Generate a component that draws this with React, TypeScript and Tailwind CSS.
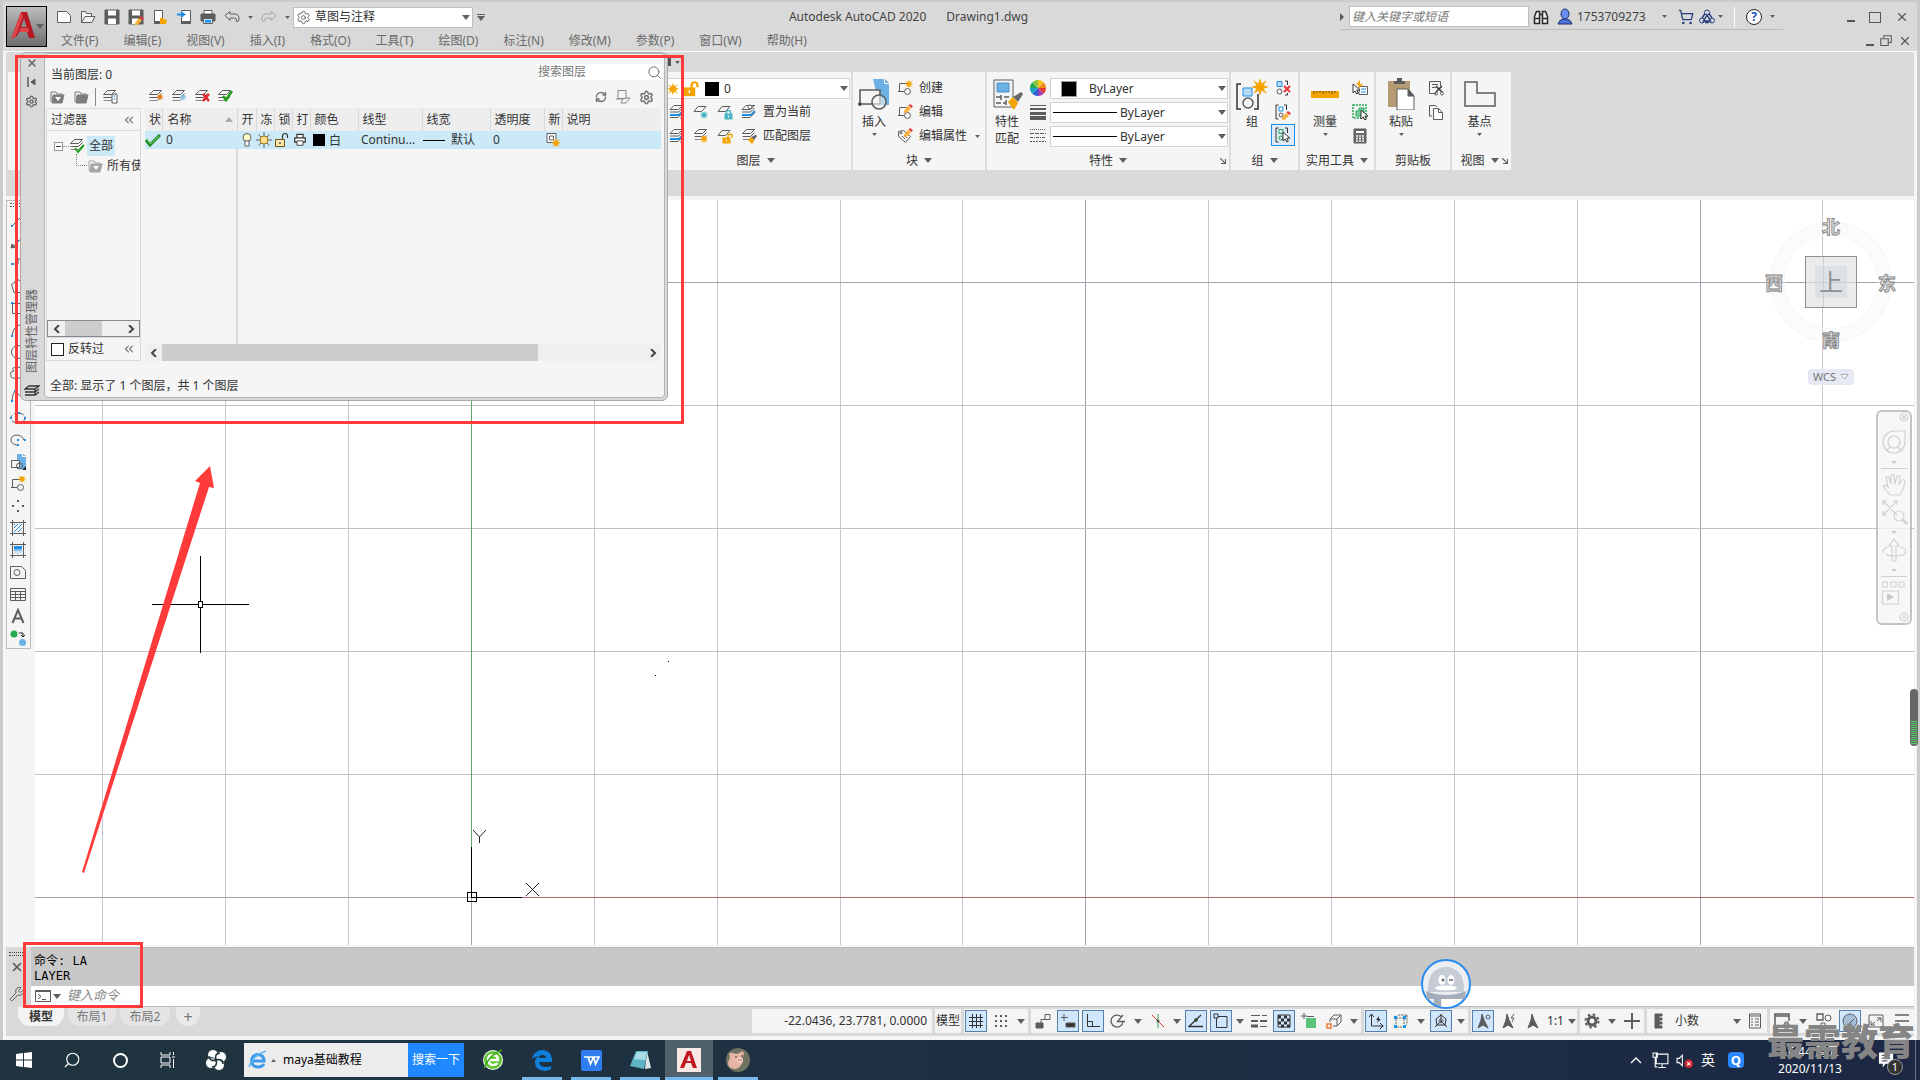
import type { ReactNode } from "react";
import { ChevronsLeft, Search, Settings, RefreshCw, ShoppingCart, Wrench, X } from "lucide-react";

const G = "#5c5c5c";
const BLUE = "#1e90e6";

function Ico({ s = 16, vb = "0 0 16 16", children }: { s?: number; vb?: string; children: ReactNode }) {
  return (
    <svg width={s} height={s} viewBox={vb} fill="none" stroke={G} strokeWidth="1" className="shrink-0">
      {children}
    </svg>
  );
}

function Caret({ small = false }: { small?: boolean }) {
  return (
    <svg width={small ? 5 : 8} height={small ? 3 : 5} viewBox="0 0 8 5" className="pointer-events-none shrink-0">
      <path d="M0 0h8L4 5z" fill="#5f5f5f" />
    </svg>
  );
}

/* ---- shared icon parts, all on a 16px grid ---- */

const Star = ({ x, y, c = "#f5a300", r = 4 }: { x: number; y: number; c?: string; r?: number }) => (
  <g transform={`translate(${x} ${y}) scale(${r / 4})`} stroke="none" fill={c}>
    <path d="M0-5L1-2 4-4 2-1 5 0 2 1 4 4 1 2 0 5-1 2-4 4-2 1-5 0-2-1-4-4-1-2z" />
  </g>
);
const Sheets = () => (
  <>
    <path d="M5.5 1.5h8l-4 4h-8zM1.5 8.5h8l4-4" />
    <path d="M1.5 11.5h8l4-4" stroke="#8a8a8a" />
  </>
);
const Sheet = () => <path d="M5 2.5h8l-4.5 5H1z" />;
const Lock = ({ x, y, c }: { x: number; y: number; c: string }) => (
  <g transform={`translate(${x} ${y})`}>
    <rect x="0" y="3" width="7" height="5" fill={c} stroke={c} />
    <path d="M1.5 3V1.5a2 2 0 014 0V3" stroke={c} strokeWidth="1.3" />
    <path d="M3.5 4.5v2" stroke="#fff" />
  </g>
);
const Unlock = ({ x, y, c, k = 1 }: { x: number; y: number; c: string; k?: number }) => (
  <g transform={`translate(${x} ${y}) scale(${k})`}>
    <rect x="0" y="4" width="7" height="5" fill={c} stroke={c} />
    <path d="M5 4V2a2 2 0 014 0v1.5" stroke={c} strokeWidth="1.5" />
    <path d="M3.5 5.5v2" stroke="#fff" />
  </g>
);
const Cursor = ({ x, y }: { x: number; y: number }) => (
  <path transform={`translate(${x} ${y})`} d="M0 0v9l2.2-2 1.5 3 1.6-.8-1.5-3H7z" fill="#fff" stroke="#333" />
);
const Pencil = ({ x, y }: { x: number; y: number }) => (
  <g transform={`translate(${x} ${y})`} stroke="none">
    <path d="M0 7l4-5 3 2.5-4 4L0 9z" fill="#f8b133" />
    <path d="M4.5 1.5L6 0l3 2.5L7.5 4z" fill="#e8323a" />
  </g>
);
const Brush = ({ x, y }: { x: number; y: number }) => (
  <g transform={`translate(${x} ${y})`} stroke="none">
    <path d="M3 2l3 3 3-4-1-1z" fill="#666" />
    <path d="M0 5l3-3 3.5 3.5L4 9z" fill="#f5a300" />
  </g>
);
const BlockShape = () => (
  <>
    <path d="M2.5 11V3.5h9M1 11.5h6" />
    <circle cx="10.5" cy="11.5" r="3" />
  </>
);

const QUICK_ICONS: { name: string; art: ReactNode }[] = [
  { name: "新建", art: <path d="M1.5 2.5h9l4 4v7h-13z" fill="#fff" /> },
  { name: "打开", art: <path d="M1.5 13.5v-11h4l1 2h5v3M1.5 13.5l3.5-6h10l-3 6z" fill="#f2f2f2" /> },
  {
    name: "保存",
    art: (
      <>
        <path d="M1 1h14v14H1z" fill="#5c5c5c" />
        <path d="M4 1.5h8v5H4zM4 9.5h8V15H4z" fill="#fff" stroke="none" />
      </>
    ),
  },
  {
    name: "另存为",
    art: (
      <>
        <path d="M1 1h14v14H1z" fill="#5c5c5c" />
        <path d="M4 1.5h8v5H4zM4 9.5h6V15H4z" fill="#fff" stroke="none" />
        <Pencil x={7} y={7} />
      </>
    ),
  },
  {
    name: "从移动设备打开",
    art: (
      <>
        <path d="M2.5 1.5h8v13h-8z" fill="#fff" />
        <path d="M2.5 12.5h8v2h-8z" fill="#5c5c5c" />
        <path d="M8 15V9h3l1 1.5h3L14 15z" fill="#f5a300" stroke="none" />
      </>
    ),
  },
  {
    name: "保存到移动设备",
    art: (
      <>
        <path d="M5.5 1.5h9v13h-9z" fill="#fff" />
        <path d="M5.5 12.5h9v2h-9z" fill="#5c5c5c" />
        <path d="M1 4.5h4V2l5 3.5L5 9V6.5H1z" fill={BLUE} stroke="none" />
      </>
    ),
  },
  {
    name: "打印",
    art: (
      <>
        <path d="M4 5V1.5h8V5" fill="#fff" />
        <path d="M1 5h14v7H1z" fill="#5c5c5c" />
        <path d="M3.5 9.5h9v5h-9z" fill="#cfe6fa" />
        <path d="M5 11h6v2.5H5z" fill={BLUE} stroke="none" />
      </>
    ),
  },
];

const MENUS = ["文件(F)", "编辑(E)", "视图(V)", "插入(I)", "格式(O)", "工具(T)", "绘图(D)", "标注(N)", "修改(M)", "参数(P)", "窗口(W)", "帮助(H)"];

function TitleBar() {
  return (
    <header className="flex h-[49px] bg-[#d9d9d9]">
      <button aria-label="应用程序菜单" className="ml-[3px] mt-1 flex h-[41px] w-[41px] shrink-0 items-center border border-black bg-linear-to-b from-[#bdbdbd] to-[#6f6f6f] pl-1">
        <svg width="25" height="30" viewBox="0 0 25 30">
          <path d="M10 0h6l8 26h-6l-2-6H8l-2 4-6 3z" fill="#b5161f" />
          <path d="M10 0l2 4L5 24l-5 3zM9 16h8l1 4H8z" fill="#e0454b" />
          <path d="M13 6l2.5 9H10z" fill="#8c8c8c" />
        </svg>
        <Caret />
      </button>
      <div className="flex min-w-0 flex-1 flex-col pt-px">
        <div className="flex h-7 items-center">
          <div className="flex items-center gap-2 pl-[9px]">
            {QUICK_ICONS.map((i) => (
              <button key={i.name} aria-label={i.name}>
                <Ico>{i.art}</Ico>
              </button>
            ))}
            <button aria-label="放弃">
              <Ico><path d="M1 6.5l5-4V5h5q4 0 4 5 0 2-2 3 0-4-3-4H6v2.5z" /></Ico>
            </button>
            <Caret small />
            <button aria-label="重做" className="opacity-40">
              <Ico><path d="M15 6.5l-5-4V5H5q-4 0-4 5 0 2 2 3 0-4 3-4h4v2.5z" /></Ico>
            </button>
            <Caret small />
          </div>
          <label className="ml-[3px] flex h-[21px] w-[180px] items-center gap-1 border border-[#bdbdbd] bg-white pl-[2px] pr-[2px]">
            <Settings size={15} color={G} strokeWidth={1.5} />
            <select aria-label="工作空间" className="min-w-0 flex-1 appearance-none text-xs leading-4 text-[#333]">
              <option>草图与注释</option>
            </select>
            <Caret />
          </label>
          <button aria-label="自定义" className="ml-1 flex w-2 flex-col gap-px">
            <span className="h-px bg-[#5f5f5f]" />
            <Caret />
          </button>
          <h1 className="flex flex-1 justify-center gap-5 pr-2 text-xs text-[#444]">
            <span>Autodesk AutoCAD 2020</span>
            <span>Drawing1.dwg</span>
          </h1>
          <div className="flex items-center border-b border-[#bcbcbc] pr-2">
            <svg width="4" height="8" viewBox="0 0 4 8" className="mr-[5px]"><path d="M0 0l4 4-4 4z" fill={G} /></svg>
            <input aria-label="搜索帮助" placeholder="键入关键字或短语" className="h-[21px] w-[180px] border border-[#bdbdbd] bg-white px-[2px] text-xs italic placeholder:text-[#777]" />
            <Ico s={24} vb="-4 -4 24 24">
              <path d="M1.5 14.5v-7l2-5h3v12zM9.5 14.5v-12h3l2 5v7zM6.5 5.5h3M1.5 9.5h5M9.5 9.5h5" fill="#eee" stroke="#2a2a2a" strokeWidth="1.5" />
            </Ico>
            <Ico s={24} vb="-4 -4 24 24">
              <ellipse cx="8" cy="5" rx="4" ry="5" fill="#6a8ef2" stroke="#1d2f66" />
              <path d="M1 15q1-4 5-5h4q4 1 5 5z" fill="#4b72dc" stroke="#1d2f66" />
            </Ico>
            <button className="w-[85px] text-left text-xs text-[#444]">1753709273</button>
            <Caret small />
            <ShoppingCart size={16} color="#28407c" strokeWidth={2} className="ml-[11px]" />
            <Ico s={24} vb="-5 -4 24 24">
              <circle cx="8" cy="3.5" r="2.5" stroke="#28407c" />
              <path d="M6 4.5L3 9M10 4.5L13 9M8 6l-3.5 6h7zM6 13.5h4" stroke="#28407c" strokeWidth="1.4" />
              <circle cx="3" cy="11.5" r="2.5" stroke="#28407c" />
              <circle cx="13" cy="11.5" r="2.5" stroke="#28407c" />
            </Ico>
            <Caret small />
            <span className="mx-[11px] h-5 w-px bg-white" />
            <button aria-label="帮助" className="mr-2 flex h-4 w-4 items-center justify-center rounded-full border border-[#222] bg-white text-xs font-bold leading-3 text-[#1d4fc0]">?</button>
            <Caret small />
          </div>
          <div className="flex w-[134px] items-center justify-end gap-[14px] pr-2 text-[#555]">
            <button aria-label="最小化" className="mt-2 h-[2px] w-2 bg-[#555]" />
            <button aria-label="最大化" className="h-[11px] w-3 border border-[#555]" />
            <button aria-label="关闭"><X size={14} strokeWidth={2} /></button>
          </div>
        </div>
        <nav className="flex h-5 items-center pl-[14px]">
          {MENUS.map((m) => (
            <button key={m} className="mr-[25px] whitespace-nowrap text-xs text-[#6a6a6a]">{m}</button>
          ))}
          <div className="ml-auto flex items-center gap-[6px] pr-[5px]">
            <button aria-label="最小化图形" className="mt-2 h-[2px] w-2 bg-[#555]" />
            <button aria-label="还原图形">
              <Ico s={12}><path d="M5 4V1h10v9h-4M1 5h10v9H1z" strokeWidth="1.5" /></Ico>
            </button>
            <button aria-label="关闭图形"><X size={14} color="#555" strokeWidth={2} /></button>
          </div>
        </nav>
      </div>
    </header>
  );
}

/* ---- ribbon ---- */

function Panel({ title, width, caret = true, launcher = false, children }: { title: string; width: string; caret?: boolean; launcher?: boolean; children: ReactNode }) {
  return (
    <section className={`relative flex shrink-0 flex-col border-r-2 border-[#dcdcdc] bg-[#f5f5f5] ${width}`}>
      <div className="flex h-[79px] pt-1">{children}</div>
      <button className="flex h-[19px] items-center justify-center gap-[6px] whitespace-nowrap text-xs text-[#333]">
        {title}
        {caret && <Caret />}
      </button>
      {launcher && (
        <span className="absolute bottom-[6px] right-[3px]">
          <Ico s={6} vb="0 0 6 6"><path d="M0 0l5 5M5.5 1v4.5H1" strokeWidth="1.2" /></Ico>
        </span>
      )}
    </section>
  );
}

function Tool({ label, art, caret = false }: { label: string; art: ReactNode; caret?: boolean }) {
  return (
    <button className="flex h-6 items-center gap-[6px] whitespace-nowrap text-xs text-[#333]">
      <Ico>{art}</Ico>
      {label}
      {caret && <span className="ml-[2px]"><Caret small /></span>}
    </button>
  );
}

function BigTool({ lines, art, width, caret = true }: { lines: string[]; art: ReactNode; width: string; caret?: boolean }) {
  return (
    <button className={`flex flex-col items-center text-xs leading-[17px] text-[#333] ${width}`}>
      <span className="mb-px h-9 pt-[2px]">
        <Ico s={32} vb="0 0 32 32">{art}</Ico>
      </span>
      {lines.map((l) => <span key={l}>{l}</span>)}
      {caret && <span className="flex h-2 items-center"><Caret small /></span>}
    </button>
  );
}

function PropCombo({ label, line }: { label: string; line: boolean }) {
  return (
    <label className="flex h-[21px] items-center border border-[#d4d4d4] bg-white pr-px">
      {line ? <span className="ml-[2px] mr-[3px] h-px w-16 bg-black" /> : <span className="ml-[10px] mr-3 h-4 w-4 border border-[#999] bg-black" />}
      <select aria-label={label} className="min-w-0 flex-1 appearance-none text-xs leading-4 text-[#333]">
        <option>ByLayer</option>
      </select>
      <Caret />
    </label>
  );
}

const BlueSheets = () => (
  <>
    <path d="M1 11h9l4-4" stroke={BLUE} strokeWidth="2" />
    <path d="M5 1.5h8.5l-4 4H1zM1 8h8.5l4-4M1 13.5h8l5-5" />
  </>
);

const LAYER_ROWS: { label: string; icons: ReactNode[]; art: ReactNode }[] = [
  {
    label: "置为当前",
    icons: [
      <><BlueSheets /><path d="M14 9l-1.5 6" stroke="#222" strokeWidth="2" /></>,
      <><Sheet /><Star x={11} y={11} c="#4ab6c4" r={3.5} /></>,
      <><Sheet /><Lock x={8} y={7} c="#4ab6c4" /></>,
    ],
    art: <><BlueSheets /><circle cx="9" cy="3" r="2" fill="#fff" /></>,
  },
  {
    label: "匹配图层",
    icons: [
      <><BlueSheets /><path d="M14 9l-1.5 6" stroke="#222" strokeWidth="2" /></>,
      <><Sheets /><Star x={11} y={11} r={3.5} /></>,
      <><Sheet /><Unlock x={6} y={6} c="#f5a300" /></>,
    ],
    art: <><Sheets /><Brush x={7} y={7} /></>,
  },
];

function Ribbon() {
  return (
    <div className="mx-[3px] h-[145px] border-t border-white bg-[#d9d9d9]">
      <div className="flex h-5 items-center pl-[661px]">
        <span className="mr-1 h-2 w-1 bg-[#555]" />
        <Caret small />
      </div>
      <div className="flex h-[98px] pl-[2px]">
        <div className="w-[652px] shrink-0 border-r-2 border-[#dcdcdc] bg-[#f5f5f5]" />
        <Panel title="图层" width="w-[193px] px-px">
          <div className="flex flex-1 flex-col">
            <label className="mb-px mt-[2px] flex h-[21px] items-center border border-[#d4d4d4] bg-white pr-px">
              <Ico s={20} vb="-4 0 20 16"><Star x={7} y={8} r={5} /></Ico>
              <Ico s={18}><Unlock x={2} y={2} c="#f5a300" k={1.3} /></Ico>
              <span className="ml-[5px] mr-[5px] h-[14px] w-[14px] bg-black" />
              <select aria-label="图层" className="min-w-0 flex-1 appearance-none text-xs leading-4 text-[#333]"><option>0</option></select>
              <Caret />
            </label>
            {LAYER_ROWS.map((r) => (
              <div key={r.label} className="flex h-6 items-center gap-2 pl-2">
                {r.icons.map((icon, i) => <Ico key={i}>{icon}</Ico>)}
                <Tool label={r.label} art={r.art} />
              </div>
            ))}
          </div>
        </Panel>
        <Panel title="块" width="w-[134px]">
          <BigTool
            lines={["插入"]}
            width="w-10 pl-[2px]"
            art={
              <>
                <path d="M15 1h11v5h5v21H21z" fill="#6cb1e6" stroke="none" />
                <path d="M27 1l4 4h-4z" fill="#6cb1e6" stroke="none" />
                <path d="M2 12h20v14H2z" fill="#f5f5f5" strokeWidth="1.6" />
                <circle cx="21" cy="24" r="7" fill="#f5f5f5" strokeWidth="1.6" fillOpacity=".6" />
                <circle cx="2" cy="26" r="1.5" fill="#333" />
              </>
            }
          />
          <div className="ml-1">
            <Tool label="创建" art={<><BlockShape /><Star x={12} y={4} r={3.5} /></>} />
            <Tool label="编辑" art={<><BlockShape /><Pencil x={7} y={0} /></>} />
            <Tool label="编辑属性" caret art={<><path d="M1.5 3.5l5-1 7 6-5 6-7-6z" /><circle cx="4" cy="5" r="1" /><path d="M5 8l3 3M7 7l3 3" /><Pencil x={7} y={0} /></>} />
          </div>
        </Panel>
        <Panel title="特性" width="w-[244px] px-px" launcher>
          <BigTool
            lines={["特性", "匹配"]}
            width="w-[38px]"
            caret={false}
            art={
              <>
                <path d="M3 2h19v27H3z" />
                <path d="M6 5h12v9H6z" fill="#6cb1e6" stroke="#4c8fc4" />
                <path d="M5 19h5M13 19h5M10 17v5M5 25h5M12 25h3M15 22v5" strokeWidth="1.5" />
                <path d="M22 19l5 5 5-8-2-2z" fill="#666" stroke="none" />
                <path d="M17 24l5-5 5 6-4 7z" fill="#f5a300" stroke="none" />
              </>
            }
          />
          <div className="flex w-6 shrink-0 flex-col items-center">
            <div className="flex h-6 items-center">
              <svg width="16" height="16" viewBox="-8 -8 16 16">
                {["#f5c518", "#f08c1a", "#e5373c", "#9b3fb5", "#2d5fd0", "#1aa3c4", "#24a852", "#8cc63f"].map((c, i) => (
                  <path key={c} d="M0 0V-8A8 8 0 015.7-5.7z" fill={c} transform={`rotate(${i * 45})`} />
                ))}
              </svg>
            </div>
            <div className="flex h-6 items-center">
              <Ico><path d="M0 1.5h16" /><path d="M0 5h16" strokeWidth="2" /><path d="M0 9.5h16" strokeWidth="3" /><path d="M0 14h16" strokeWidth="4" /></Ico>
            </div>
            <div className="flex h-6 items-center">
              <Ico><path d="M0 1.5h16" strokeDasharray="1 1" /><path d="M0 5.5h16" strokeDasharray="4 1" /><path d="M0 9.5h16" strokeDasharray="3 1 1 1" /><path d="M0 13.5h16" strokeDasharray="2 1" /></Ico>
            </div>
          </div>
          <div className="flex flex-1 flex-col gap-[3px] pt-[2px]">
            <PropCombo label="对象颜色" line={false} />
            <PropCombo label="线宽" line />
            <PropCombo label="线型" line />
          </div>
        </Panel>
        <Panel title="组" width="w-[69px]">
          <BigTool
            lines={["组"]}
            width="w-10 pl-[2px]"
            caret={false}
            art={
              <>
                <path d="M5 6H1v25h4M18 31h4V16" stroke="#333" strokeWidth="1.5" />
                <path d="M7 10h9v8H7z" fill="#b9dcf6" stroke={BLUE} />
                <circle cx="12" cy="25" r="5" strokeWidth="1.5" />
                <Star x={24} y={9} r={7} />
              </>
            }
          />
          <div className="flex flex-col items-center">
            <button aria-label="解除编组" className="flex h-6 w-6 items-center justify-center">
              <Ico><path d="M2 1.5h5v5H2z" stroke={BLUE} fill="#b9dcf6" /><circle cx="4.5" cy="11.5" r="2.5" /><path d="M10 1h2.5v4M12.5 13v2H10" stroke="#333" /><path d="M9 6l6 6M15 6l-6 6" stroke="#e5373c" strokeWidth="2" /></Ico>
            </button>
            <button aria-label="组编辑" className="flex h-6 w-6 items-center justify-center">
              <Ico><path d="M3.5 1H1v14h2.5M9 1h2.5v5" stroke="#333" /><path d="M4 3h4v4H4z" stroke={BLUE} /><circle cx="6" cy="11" r="2" /><Pencil x={7} y={7} /></Ico>
            </button>
            <button aria-label="启用组选择" aria-pressed="true" className="flex h-[22px] w-6 items-center justify-center border border-[#1e90e6] bg-[#deebf7]">
              <Ico><path d="M3.5 1H1v14h2.5M10 1h2.5v5" stroke="#333" /><path d="M4 2.5h4v4H4z" stroke="#24a852" /><circle cx="6" cy="11" r="2" stroke="#24a852" /><Cursor x={8} y={5} /></Ico>
            </button>
          </div>
        </Panel>
        <Panel title="实用工具" width="w-[76px]">
          <BigTool
            lines={["测量"]}
            width="w-[50px]"
            art={
              <>
                <path d="M2 13h28v7H2z" fill="#f5a300" stroke="none" />
                <path d="M5 13v3M8 13v2M11 13v2M14 13v3M17 13v2M20 13v2M23 13v3M26 13v2" stroke="#6b4a00" />
              </>
            }
          />
          <div className="flex flex-col">
            <button aria-label="快速选择" className="flex h-6 w-5 items-center justify-center">
              <Ico><path d="M7 6.5h8.5v8H7z" fill="#fff" /><path d="M9 9h5M9 12h5" stroke={BLUE} /><Cursor x={1} y={4} /><path d="M8 0L4 5h3L6 9l5-5H8z" fill="#f5a300" stroke="none" /></Ico>
            </button>
            <button aria-label="全部选择" className="flex h-6 w-5 items-center justify-center">
              <Ico><path d="M1 1h13v13H1z" stroke="#24a852" strokeWidth="1.5" strokeDasharray="2 1" /><path d="M4 7v5h5V9h3V4H7v3z" fill="#7fd09c" stroke="#24a852" /><Cursor x={9} y={6} /></Ico>
            </button>
            <button aria-label="快速计算器" className="flex h-6 w-5 items-center justify-center">
              <Ico><path d="M2 1h12v14H2z" fill="#666" /><path d="M4 3h8v2H4z" fill="#fff" stroke="none" /><path d="M4 8h8M4 10.5h8M4 13h8" stroke="#fff" strokeWidth="1.5" strokeDasharray="2 1" /></Ico>
            </button>
          </div>
        </Panel>
        <Panel title="剪贴板" width="w-[76px]" caret={false}>
          <BigTool
            lines={["粘贴"]}
            width="w-[50px]"
            art={
              <>
                <path d="M3 3h22v26H3z" fill="#b59a74" stroke="none" />
                <path d="M9 3h3V0h5v3h3v3H9z" fill="#5c5c5c" stroke="none" />
                <path d="M12 11h11l6 7v14H12z" fill="#fff" />
                <path d="M23 11l6 7h-6z" fill="#5c5c5c" />
              </>
            }
          />
          <div className="flex flex-col">
            <button aria-label="剪切" className="flex h-6 w-5 items-center justify-center">
              <Ico><path d="M12.5 6V1.5h-11v12H8M4 4.5h6M4 7.5h4" /><path d="M8 6l6 6M14 6l-6 6" strokeWidth="1.5" stroke="#333" /><circle cx="8" cy="13.5" r="1.5" /><circle cx="14" cy="13.5" r="1.5" /></Ico>
            </button>
            <button aria-label="复制" className="flex h-6 w-5 items-center justify-center">
              <Ico><path d="M4 12H1.5V1.5h6L9 3" /><path d="M5.5 4.5h5l4 4v7h-9z" fill="#fff" /><path d="M10.5 4.5v4h4" /></Ico>
            </button>
          </div>
        </Panel>
        <Panel title="视图" width="w-[61px] pr-1" launcher>
          <BigTool lines={["基点"]} width="w-full" art={<path d="M1 4h12v11h18v13H1z" strokeWidth="1.5" />} />
        </Panel>
      </div>
    </div>
  );
}

/* ---- layer properties palette ---- */

const COLS = [
  { h: "状", w: "w-[17px]" },
  { h: "名称", w: "w-[75px]" },
  { h: "开", w: "w-[19px]" },
  { h: "冻", w: "w-[18px]" },
  { h: "锁", w: "w-[18px]" },
  { h: "打", w: "w-[18px]" },
  { h: "颜色", w: "w-12" },
  { h: "线型", w: "w-16" },
  { h: "线宽", w: "w-[68px]" },
  { h: "透明度", w: "w-[54px]" },
  { h: "新", w: "w-[18px]" },
  { h: "说明", w: "" },
];

const FolderIco = ({ c = "#7d7d7d" }: { c?: string }) => (
  <>
    <path d="M2 3h5l1 2h5v2M2 3v10" stroke={c} />
    <path d="M4 6h11l-2 8H3z" fill={c} stroke={c} />
  </>
);

const LAYER_TOOLS: { name: string; art: ReactNode }[] = [
  { name: "新建图层", art: <><Sheets /><Star x={12} y={8} r={3} c="#e87b10" /></> },
  { name: "在所有视口中冻结", art: <><Sheets /><Star x={12} y={8} r={3} c="#7fc4e0" /></> },
  { name: "删除图层", art: <><Sheets /><path d="M9 5l6 7M15 5l-6 7" stroke="#e5252c" strokeWidth="2.5" /></> },
  { name: "置为当前图层", art: <><Sheets /><path d="M6 7l3 4 6-9" stroke="#24a01e" strokeWidth="2.5" /></> },
];

function ScrollArrow({ left = false }: { left?: boolean }) {
  return (
    <button aria-label={left ? "向左滚动" : "向右滚动"} className="flex w-[17px] shrink-0 items-center justify-center">
      <Ico s={8} vb="0 0 8 8"><path d={left ? "M6 0L2 4l4 4" : "M2 0l4 4-4 4"} strokeWidth="2" stroke="#444" /></Ico>
    </button>
  );
}

function LayerPalette() {
  return (
    <div className="absolute left-[20px] top-[52px] flex h-[349px] w-[648px] rounded-md border border-[#a9a9a9] bg-[#d9d9d9] pb-[2px] pr-[2px]">
      <div className="mr-[2px] flex w-[21px] flex-col items-center pb-px text-[#666]">
        <button aria-label="关闭选项板" className="mt-1"><X size={12} strokeWidth={3} /></button>
        <span className="mt-2"><Ico s={10} vb="0 0 10 10"><path d="M1 0v10" strokeWidth="1.5" /><path d="M8 2v6L4 5z" fill={G} /></Ico></span>
        <Settings size={13} strokeWidth={2.5} className="mt-2" />
        <span className="mb-2 mt-auto rotate-180 text-xs leading-4 text-[#666] [text-orientation:sideways] [writing-mode:vertical-rl]">图层特性管理器</span>
        <Ico><path d="M5 5h10l-4 3H1zM1 11h10l4-3M1 14h10l4-3M11 8v3M11 11v3" strokeWidth="1.3" stroke="#333" /></Ico>
      </div>
      <div className="flex min-w-0 flex-1 flex-col rounded border border-[#b5b5b5] bg-[#f5f5f5] text-xs text-[#333]">
        <div className="flex h-[31px] justify-between pl-[6px] pr-[2px]">
          <span className="pt-[13px] leading-4">当前图层: 0</span>
          <label className="mt-[10px] flex h-4 w-[124px] items-center bg-white">
            <input aria-label="搜索图层" placeholder="搜索图层" className="min-w-0 flex-1 text-xs leading-4 placeholder:text-[#777]" />
            <Search size={15} color="#666" strokeWidth={1.5} />
          </label>
        </div>
        <div className="flex h-[23px] items-center pl-1 pr-[10px] pt-px">
          <Ico><FolderIco /><path d="M6 8h6l-3 4z" fill="#fff" stroke="none" /></Ico>
          <span className="w-2" />
          <Ico><FolderIco /></Ico>
          <span className="mx-[6px] h-[18px] w-px bg-[#888]" />
          <span className="mr-[30px]"><Ico><Sheets /><path d="M10 5h5v9h-5z" fill="#fff" /><path d="M11.5 7h2M11.5 10h2" stroke={BLUE} /></Ico></span>
          <span className="flex gap-[7px]">
            {LAYER_TOOLS.map((t) => <button key={t.name} aria-label={t.name}><Ico>{t.art}</Ico></button>)}
          </span>
          <span className="ml-auto flex items-center gap-2">
            <RefreshCw size={12} color="#777" strokeWidth={3} />
            <Ico><path d="M3 1.5h8v8H3zM1 10h7l-2 4M11 9h4l-4 5H6" stroke="#888" /></Ico>
            <Settings size={15} color="#777" strokeWidth={2.5} />
          </span>
        </div>
        <div className="flex min-h-0 flex-1">
          <div className="ml-px mr-1 flex w-[95px] flex-col border border-[#dadada]">
            <div className="flex h-[22px] items-center justify-between border-b border-[#dadada] px-1">
              过滤器
              <ChevronsLeft size={14} color="#777" />
            </div>
            <div className="flex flex-1 flex-col overflow-hidden pl-[7px] pt-[3px]">
              <div className="flex h-6 items-center">
                <span className="flex h-[9px] w-[9px] items-center border border-[#999] bg-white px-px"><span className="h-px w-full bg-[#345]" /></span>
                <span className="w-[6px] border-t border-dotted border-[#888]" />
                <Ico><Sheets /><path d="M6 10l3 4 6-7" stroke="#24a01e" strokeWidth="2" /></Ico>
                <span className="ml-[2px] bg-[#cce9f7] px-[2px] leading-5">全部</span>
              </div>
              <div className="flex h-4 items-center pl-[22px]">
                <span className="-mt-3 h-3 w-[11px] shrink-0 border-b border-l border-dotted border-[#888]" />
                <Ico><FolderIco c="#a5a5a5" /><path d="M6 8h6l-3 4z" fill="#fff" stroke="none" /></Ico>
                <span className="ml-1 whitespace-nowrap">所有使</span>
              </div>
            </div>
            <div className="flex h-[17px] border border-[#868a94] bg-[#efefef]">
              <ScrollArrow left />
              <span className="w-[37px] bg-[#cdcdcd]" />
              <span className="flex-1" />
              <ScrollArrow />
            </div>
            <div className="flex h-[23px] items-center justify-between border-t border-[#dadada] px-1">
              <label className="flex items-center gap-1">
                <input type="checkbox" className="h-[13px] w-[13px] appearance-none border border-[#222] bg-white" />
                反转过
              </label>
              <ChevronsLeft size={14} color="#777" />
            </div>
          </div>
          <div className="flex min-w-0 flex-1 flex-col pr-[3px]">
            <table className="w-full table-fixed border-collapse text-left">
              <thead>
                <tr className="h-[23px] bg-[#eeeeee]">
                  {COLS.map((c) => (
                    <th key={c.h} className={`overflow-hidden whitespace-nowrap border-r border-[#d9d9d9] p-0 pl-1 font-normal last:border-r-0 ${c.w}`}>
                      {c.h === "名称" ? (
                        <span className="flex items-center justify-between pl-px pr-1">
                          名称
                          <svg width="8" height="5" viewBox="0 0 8 5"><path d="M0 5l4-5 4 5z" fill="#aaa" /></svg>
                        </span>
                      ) : c.h}
                    </th>
                  ))}
                </tr>
              </thead>
              <tbody>
                <tr className="h-[18px] bg-[#cce9f7]">
                  <td className="p-0"><Ico><path d="M1 8l4 5L15 3" stroke="#1f8a1f" strokeWidth="3" /><path d="M2 8l3.5 4L14 4" stroke="#7ccf6c" /></Ico></td>
                  <td className="p-0 pl-1">0</td>
                  <td className="p-0 pl-[2px]"><Ico><circle cx="8" cy="5.5" r="4" fill="#fff8c8" /><path d="M6 9h4v5H6z" fill="#fff" /></Ico></td>
                  <td className="p-0"><Ico><path d="M8 0v16M0 8h16M2.5 2.5l11 11M13.5 2.5l-11 11" /><circle cx="8" cy="8" r="4" fill="#ffe08a" stroke="#a27818" /></Ico></td>
                  <td className="p-0"><Ico><path d="M1.5 7.5h9v7h-9z" fill="#fbe6ae" stroke="#6d5517" /><path d="M8.5 7V4a2.5 2.5 0 015 0v2M6 10v2" stroke="#333" strokeWidth="1.2" /></Ico></td>
                  <td className="p-0 pl-px"><Ico s={14}><path d="M4.5 5V1.5h7V5M2 5.5h12v5H2z" fill="#fff" stroke="#333" strokeWidth="1.4" /><path d="M4.5 9h7v5h-7z" fill="#fff" stroke="#333" /></Ico></td>
                  <td className="whitespace-nowrap p-0 pl-[3px]"><span className="mr-1 inline-block h-3 w-3 bg-black align-middle" /><span className="align-middle">白</span></td>
                  <td className="whitespace-nowrap p-0 pl-[3px]">Continu...</td>
                  <td className="whitespace-nowrap p-0 pl-px"><span className="mr-[6px] inline-block h-px w-[22px] bg-black align-middle" />默认</td>
                  <td className="p-0 pl-[3px]">0</td>
                  <td className="p-0 pl-px"><Ico><path d="M2 1.5h9v9H2z" fill="#fff" /><path d="M4.5 4h4v4h-4z" /><Star x={11} y={11} r={4} /></Ico></td>
                  <td />
                </tr>
              </tbody>
            </table>
            <div className="w-[93px] flex-1 border-r-2 border-[#d9d9d9]" />
            <div className="flex h-[17px] bg-[#efefef]">
              <ScrollArrow left />
              <span className="w-[376px] bg-[#cdcdcd]" />
              <span className="flex-1" />
              <ScrollArrow />
            </div>
          </div>
        </div>
        <p className="flex h-9 items-center pl-[5px] pt-[14px]">全部: 显示了 1 个图层，共 1 个图层</p>
      </div>
    </div>
  );
}

/* ---- drawing area ---- */

const DRAW_TOOLS: { name: string; art: ReactNode }[] = [
  { name: "直线", art: <><path d="M2 14L14 2" /><path d="M1 13h2v2H1z" fill={BLUE} stroke="none" /></> },
  { name: "构造线", art: <><path d="M1 14L14 2M1 14l1-4 3 3z" fill={G} /><path d="M7 6h2v2H7z" fill={BLUE} stroke="none" /></> },
  { name: "多段线", art: <><path d="M2 8h6V3h5" /><path d="M1 7h2v2H1z" fill={BLUE} stroke="none" /></> },
  { name: "多边形", art: <path d="M8 1.5l6.5 5-2.5 8H4L1.5 6.5z" /> },
  { name: "矩形", art: <><path d="M2.5 3.5h11v10h-11z" /><path d="M1 2h2v2H1z" fill={BLUE} stroke="none" /></> },
  { name: "圆弧", art: <><path d="M2 14Q3 3 14 2" /><path d="M1 13h2v2H1z" fill={BLUE} stroke="none" /></> },
  { name: "圆", art: <circle cx="8" cy="8" r="6.5" /> },
  { name: "修订云线", art: <path d="M4 5q-3-3 1-3.5 2-1.5 4 0 4-1 4 2.5 2 2 0 4 0 4-4 4-3 2-5 0-4 0-3-3-2-3 3-4z" /> },
  { name: "样条曲线", art: <><path d="M2 13Q3 2 6 4T14 12" /><path d="M1 12h2v2H1zM4 2h2v2H4z" fill={BLUE} stroke="none" /></> },
  { name: "椭圆", art: <><ellipse cx="8" cy="8" rx="7" ry="5" strokeDasharray="4 2" /><path d="M0 7h2v2H0zM14 7h2v2h-2zM8 2h2v2H8z" fill={BLUE} stroke="none" /></> },
  { name: "椭圆弧", art: <><path d="M14 8Q12 3 6 3 1 4 1 8t6 5" /><path d="M7 7h2v2H7zM14 7h2v2h-2zM7 12h2v2H7z" fill={BLUE} stroke="none" /></> },
  { name: "插入块", art: <><path d="M7 0h5v3h4v12H7z" fill="#6cb1e6" stroke="none" /><path d="M13 0l3 2h-3z" fill="#6cb1e6" stroke="none" /><path d="M1.5 6.5h8v7h-8z" fill="#f5f5f5" /><circle cx="9.5" cy="12" r="3" /><path d="M16 12v4h-4z" fill="#222" stroke="none" /></> },
  { name: "创建块", art: <><BlockShape /><Star x={12} y={3} r={3.5} /></> },
  { name: "点", art: <path d="M7 2h2v2H7zM2 7h2v2H2zM12 7h2v2h-2zM7 12h2v2H7z" fill={G} stroke="none" /> },
  { name: "图案填充", art: <><path d="M4 5l1-1M4 8l4-4M4 12l8-8M8 12l4-4" stroke={BLUE} /><path d="M0 2.5h16M0 13.5h16M2.5 0v16M13.5 0v16" /></> },
  { name: "渐变色", art: <><path d="M4 4h8v3H4z" fill={BLUE} stroke="none" /><path d="M4 7h8v2H4z" fill="#7fbef0" stroke="none" /><path d="M4 9h8v3H4z" fill="#cde6f9" stroke="none" /><path d="M0 2.5h16M0 13.5h16M2.5 0v16M13.5 0v16" /></> },
  { name: "面域", art: <><path d="M.5 2.5h11l4 4v8H.5z" /><circle cx="7" cy="8.5" r="3" /></> },
  { name: "表格", art: <path d="M.5 2.5h15v12H.5zM.5 5.5h15M.5 8.5h15M.5 11.5h15M5.5 5v9M10.5 5v9" /> },
  { name: "多行文字", art: <path d="M2.5 15L8 2l5.5 13M4.5 10.5h7" strokeWidth="2" /> },
  { name: "添加选定对象", art: <><circle cx="4" cy="4" r="3.5" fill="#24a852" stroke="none" /><circle cx="12.5" cy="12.5" r="3.5" fill="#6cb1e6" stroke="none" /><path d="M9 3h4v4M11 5l2 2 2-2" stroke="#222" /></> },
];

function ViewCube() {
  const marks = [
    { t: "北", x: 71, y: 19 },
    { t: "南", x: 71, y: 132 },
    { t: "西", x: 14, y: 75 },
    { t: "东", x: 127, y: 75 },
  ];
  return (
    <svg width="144" height="140" viewBox="0 0 144 140" className="absolute right-[10px] top-[15px]">
      <circle cx="71" cy="67" r="54" fill="none" stroke="#f0f0f0" strokeWidth="13" strokeOpacity=".25" />
      <circle cx="71" cy="67" r="60" fill="none" stroke="#f5f5f5" />
      <circle cx="71" cy="67" r="47" fill="none" stroke="#f5f5f5" />
      <rect x="45.5" y="41.5" width="51" height="51" fill="#e9e9e9" fillOpacity=".9" stroke="#909090" />
      <rect x="55" y="51" width="32" height="32" fill="#dce1e5" />
      <path d="M46 67.5h50M63.5 42v50" stroke="#cccfd2" />
      <text x="71" y="76" textAnchor="middle" fontSize="24" fill="#8d9296">上</text>
      {marks.map((m) => (
        <text key={m.t} x={m.x} y={m.y} textAnchor="middle" fontSize="18" fontWeight="bold" fill="#e0e0e0" stroke="#7c7c7c" strokeWidth=".8">{m.t}</text>
      ))}
    </svg>
  );
}

function NavBar() {
  return (
    <div className="absolute right-[2px] top-[210px] flex h-[215px] w-9 flex-col items-center rounded-md border-2 border-[#c4c4c4] bg-[#f5f5f5]/80">
      <svg width="32" height="211" viewBox="-2 -17 32 211" fill="none" stroke="#d0d3d3" strokeWidth="1.2">
        <circle cx="24" cy="-12" r="4" />
        <path d="M22-14l4 4M26-14l-4 4" />
        <circle cx="24" cy="188" r="4" />
        <path d="M22 187h4M22 189h4" />
        <path d="M14 2h11v11a11 11 0 11-11-11z" />
        <circle cx="14" cy="13" r="6" />
        <path d="M10 18l-4 4M18 18l4 4M1 39.5h26M1 147.5h26" />
        <path d="M9 65L3 57q2-2 5 1L6 48q2-1 3 1l2 6V46q2-1 3 0l1 9 2-8q2-1 3 1l-1 8 3-5q2-1 3 1-1 8-5 14H11z" />
        <path d="M3 72l14 14M17 72L3 86M3 76v-4h4M13 72h4v4M3 82v4h4" />
        <circle cx="19" cy="87" r="5" />
        <path d="M23 91l4 4" strokeWidth="3" />
        <path d="M12 132v-15H9l5-7 5 7h-3v15zM20 118q6 1 6 5t-12 4q-6 0-8-2M8 118q-6 2-5 6" />
        <path d="M2.5 153h5v5h-5zM11 153h5v5h-5zM19 153h5v5h-5zM2.5 162h16v13h-16z" />
        <path d="M7 164l7 4-7 4zM11 32h6l-3 3zM11 102h6l-3 3zM11 140h6l-3 3z" fill="#c8caca" stroke="none" />
      </svg>
    </div>
  );
}

function DrawingArea() {
  const steps = [-3, -2, -1, 1, 2, 3, 4, 5, 6, 7, 8, 9, 10, 11];
  return (
    <main className="flex min-h-0 flex-1 pl-[3px]">
      <div className="flex w-[25px] shrink-0 flex-col items-center self-start border border-[#bcbcbc] pb-[2px] pr-[2px] pt-[2px]">
        <span className="h-1 w-4 border-y border-dotted border-[#555]" />
        <div className="flex flex-col gap-[6px] pt-[5px]">
          {DRAW_TOOLS.map((t) => (
            <button key={t.name} aria-label={t.name}><Ico>{t.art}</Ico></button>
          ))}
        </div>
      </div>
      <div className="relative ml-1 mr-[3px] flex-1 overflow-hidden bg-white">
        <svg width="100%" height="100%" className="absolute inset-0" fill="none">
          <g transform="translate(-35 -200)" shapeRendering="crispEdges">
            {steps.map((k) => (
              <path key={k} d={`M${471.5 + Math.round(122.85 * k)} 200V2000`} stroke={k % 5 === 0 ? "#a3a3b0" : "#c6c6cd"} />
            ))}
            {[0, 1, 2, 3, 4, 5].map((k) => (
              <path key={k} d={`M35 ${897.5 - Math.ceil(122.85 * k)}H3000`} stroke={k % 5 === 0 ? "#a3a3b0" : "#c0c0c8"} />
            ))}
            <path d="M471.5 897V200" stroke="#62a768" />
            <path d="M471.5 897V2000" stroke="#a3a3b0" />
            <path d="M471 897.5H3000" stroke="#b8686c" />
            <path d="M471.5 847v50.5h50" stroke="#000" />
            <path d="M467.5 892.5h9v9h-9z" stroke="#000" />
            <path d="M668 661h1v1h-1zM655 675h1v1h-1z" fill="#000" />
            <path d="M152 604.5h97M200.5 556v97" stroke="#000" />
            <path d="M198.5 601.5h4v6h-4z" fill="#fff" stroke="#000" />
          </g>
          <g transform="translate(-35 -200)" stroke="#222">
            <path d="M473 830l6.5 7 6.5-7M479.5 837v6M526 883l13 13M539 883l-13 13" />
          </g>
        </svg>
        <ViewCube />
        <button className="absolute right-[60px] top-[169px] flex h-4 w-[46px] items-center justify-center gap-1 rounded bg-[#e6e8f3] text-[11px] text-[#777]">
          WCS
          <svg width="9" height="6" viewBox="0 0 9 6"><path d="M1 .5h7L4.5 5z" fill="#fff" stroke="#aaa" /></svg>
        </button>
        <NavBar />
      </div>
    </main>
  );
}

/* ---- command line and status bar ---- */

function CommandLine() {
  return (
    <div className="mx-[3px] mt-[2px] flex h-[60px] shrink-0 bg-[#d9d9d9]">
      <div className="flex w-[25px] flex-col items-center pr-[3px] pt-[5px]">
        <span className="h-1 w-4 border-y border-dotted border-[#444]" />
        <X size={14} color={G} strokeWidth={3} className="mt-1" />
        <Wrench size={16} color={G} strokeWidth={1.5} className="mt-3" />
      </div>
      <div className="flex flex-1 flex-col border-y border-[#bbb]">
        <div className="flex-1 bg-[#c8c8c8] pl-[3px] pt-[6px] font-['DejaVu_Sans_Mono','Noto_Sans_CJK_SC',monospace] text-xs leading-[15px] text-black">
          <p>命令: LA</p>
          <p>LAYER</p>
        </div>
        <label className="flex h-5 items-center bg-white pl-1">
          <Ico><path d="M.5 2.5h15v11H.5z" fill="#fff" /><path d="M.5 3h15" strokeWidth="2" /><path d="M3 6l3 2.5L3 11M7 11.5h4" /></Ico>
          <span className="ml-[2px]"><Caret /></span>
          <input aria-label="命令" placeholder="键入命令" className="ml-[6px] flex-1 text-[13px] italic placeholder:text-[#888]" />
        </label>
      </div>
    </div>
  );
}

function Cell({ name, on = false, children }: { name: string; on?: boolean; children: ReactNode }) {
  return (
    <button aria-label={name} aria-pressed={on} className="flex w-6 shrink-0 items-center justify-center">
      <span className={`flex h-[22px] w-[22px] items-center justify-center ${on ? "border border-[#5580ab] bg-[#cfe6fc]" : ""}`}>
        <Ico>{children}</Ico>
      </span>
    </button>
  );
}

const Drop = ({ tight = false }: { tight?: boolean }) => (
  <span className={`flex items-center justify-center ${tight ? "w-3" : "w-[14px]"}`}><Caret /></span>
);
const Group = ({ gap = "gap-px", children }: { gap?: string; children: ReactNode }) => (
  <div className={`flex h-6 shrink-0 bg-[#f4f4f4] ${gap}`}>{children}</div>
);
const Needle = () => <path d="M7 1l2 6 4 8-5-3-5 3 3-8z" fill={G} />;

function StatusBar() {
  return (
    <div className="mx-[3px] flex h-[29px] shrink-0 bg-[#d9d9d9] text-xs text-[#333]">
      <div className="flex h-[19px] pl-3">
        <button className="w-[46px] rounded-b-xl bg-[#f4f4f4] font-bold">模型</button>
        <button className="ml-1 w-[48px] rounded-b-xl bg-[#e4e4e4] text-[#777]">布局1</button>
        <button className="ml-1 w-[50px] rounded-b-xl bg-[#e4e4e4] text-[#777]">布局2</button>
        <button className="ml-[6px] w-[24px] rounded-b-xl bg-[#e9e9e9] text-[16px] leading-4 text-[#777]">+</button>
      </div>
      <div className="ml-auto flex gap-[3px] pt-[2px]">
        <div className="flex h-6 w-[180px] items-center justify-end bg-[#f4f4f4] pr-[5px]">-22.0436, 23.7781, 0.0000</div>
        <Group><button className="w-[26px] whitespace-nowrap">模型</button></Group>
        <Group>
          <Cell name="栅格" on><path d="M4.5 1v14M8.5 1v14M12.5 1v14M1 4.5h14M1 8.5h14M1 12.5h14" stroke="#333" /></Cell>
          <Cell name="捕捉"><path d="M2 3h13M2 8h13M2 13h13" strokeWidth="2" strokeDasharray="2 3" /></Cell>
          <Drop />
        </Group>
        <Group>
          <Cell name="推断约束"><path d="M10 1.5h5v5h-5zM10 6.5H6V10" /><path d="M1 10h7v5H1z" fill={G} /></Cell>
          <Cell name="动态输入" on><path d="M4 1v7M1 4.5h7" /><path d="M6 10h9v4H6z" fill="#333" /></Cell>
          <Cell name="正交" on><path d="M2.5 1v12.5H15M2.5 8.5h5v5" stroke="#333" /></Cell>
          <Cell name="极轴追踪"><path d="M11 3.5A6 6 0 1013 9M15 8.5H7.5L13 2" strokeWidth="1.3" /></Cell>
          <Drop />
          <Cell name="等轴测草图"><path d="M2 2l12 12" stroke="#d33" /><path d="M8 1v14" stroke="#24a852" /><circle cx="8" cy="8" r="1" stroke="#333" /></Cell>
          <Drop tight />
          <Cell name="对象捕捉追踪" on><path d="M15 13.5H1L13 2" stroke="#333" strokeWidth="1.3" /><circle cx="8" cy="7" r="1.5" fill="#333" /></Cell>
          <Cell name="对象捕捉" on><path d="M1 1h4v4H1zM5 3.5h9v11H3.5V5" stroke="#333" /></Cell>
          <Drop tight />
          <Cell name="线宽"><path d="M0 2.5h9M11 2.5h5" /><path d="M0 8h7M9 8h7" strokeWidth="2" /><path d="M0 13h7" strokeWidth="3" /><path d="M9 13.5h7" /></Cell>
          <Cell name="透明度" on><path d="M2 2h12v12H2z" stroke="#333" /><path d="M2 4h12M2 10h12" stroke="#333" strokeWidth="3" strokeDasharray="3 3" /><path d="M5 7h9M5 13h9" stroke="#333" strokeWidth="3" strokeDasharray="3 3" /></Cell>
          <Cell name="选择循环"><path d="M5 5h10v10H5z" fill="#57c47a" stroke="none" /><path d="M3 0v6M0 3h6M6 3.5h7" /></Cell>
          <Cell name="三维对象捕捉"><path d="M7 13h4l4-4V2H8L4 6v3M4 6h7v7M11 6l4-4" /><path d="M1 11h4v4H1z" stroke="#e87b30" strokeWidth="1.5" /></Cell>
          <Drop />
        </Group>
        <Group>
          <Cell name="动态 UCS" on><path d="M3.5 1v12h12M1 4l2.5-3L6 4M12 10l3 3-3 3" stroke="#333" /><path d="M11 3L8 7h2l-1 3 4-4h-2z" fill="#333" stroke="none" /></Cell>
          <Cell name="选择过滤"><path d="M3 4l3-2h8v9l-3 3H3zM3 5h8v9M11 5l3-3" strokeDasharray="2 1" /><path d="M1 3h3v3H1zM10 3h3v3h-3zM1 12h3v3H1zM10 12h3v3h-3z" fill={BLUE} stroke="none" /></Cell>
          <Drop />
          <Cell name="小控件" on><path d="M8 8V1M8 8l6 6M8 8l-6 6M8 2l5 4-1 6H4L3 6z" stroke="#333" /><circle cx="8" cy="8" r="2" /></Cell>
          <Drop />
        </Group>
        <Group>
          <Cell name="注释可见性" on><Needle /><circle cx="13" cy="4" r="2" /></Cell>
          <Cell name="自动缩放"><Needle /><path d="M14 1l-3 4h3l-2 4" /></Cell>
          <Cell name="注释对象"><Needle /></Cell>
          <button className="flex w-[31px] items-center justify-center gap-1">1:1<Caret /></button>
        </Group>
        <Group>
          <Cell name="切换工作空间"><circle cx="8" cy="8" r="4" strokeWidth="3" /><circle cx="8" cy="8" r="6.5" strokeWidth="2" strokeDasharray="2.5 2.6" /></Cell>
          <Drop />
          <Cell name="注释监视器"><path d="M8 0v16M0 8h16" strokeWidth="2" /></Cell>
        </Group>
        <Group>
          <Cell name="单位"><path d="M4 1v14h7v-2H8v-2h3V9H8V7h3V5H8V3h3V1z" fill={G} /></Cell>
          <label className="flex w-[70px] items-center pl-[3px] pr-px">
            <select aria-label="图形单位" className="min-w-0 flex-1 appearance-none text-xs"><option>小数</option></select>
            <Caret />
          </label>
          <Cell name="快捷特性"><path d="M2.5 1h11v14h-11zM2.5 3h11M4 6h2M8 6h4M4 9h2M8 9h4M4 12h2M8 12h4" /></Cell>
        </Group>
        <Group gap="gap-[2px]">
          <Cell name="锁定用户界面"><path d="M9 14H1V1h14v7M1 3h14" strokeWidth="1.5" /><path d="M10 11h5v4h-5zM11 11V9h3v2" /></Cell>
          <Drop />
          <Cell name="隔离对象"><path d="M1 1h6v6H1z" strokeWidth="1.3" /><circle cx="12" cy="5" r="3" /><path d="M5 10h4v4H5z" /></Cell>
          <Cell name="图形性能" on><circle cx="8" cy="8" r="7" fill="#a7bdd6" /><path d="M7 11l5-5" /></Cell>
          <Cell name="全屏显示"><path d="M1 2h14v12H1zM9 5h4v4M13 5L9 8M3 8v4h4M3 12l4-3" /></Cell>
          <Cell name="自定义"><path d="M1 2h14M1 8h14M1 14h14" strokeWidth="1.5" /></Cell>
        </Group>
      </div>
    </div>
  );
}

/* ---- windows taskbar ---- */

function TaskIcon({ name, active = false, running = false, children }: { name: string; active?: boolean; running?: boolean; children: ReactNode }) {
  return (
    <button aria-label={name} className={`flex h-10 w-12 shrink-0 flex-col items-center justify-between ${active ? "bg-[#50616b]" : ""}`}>
      <span className="flex flex-1 items-center pt-[3px]">{children}</span>
      <span className={`h-[3px] ${active ? "w-full" : "w-10"} ${running ? "bg-[#76b9ed]" : ""}`} />
    </button>
  );
}

function Taskbar() {
  return (
    <footer className="flex h-10 shrink-0 items-center bg-linear-to-r from-[#20353f] to-[#1c2844] text-white">
      <TaskIcon name="开始">
        <svg width="16" height="16" viewBox="0 0 16 16" fill="#fff"><path d="M0 2l7-1v6.5H0zM8 1l8-1v7.5H8zM0 8.5h7V15l-7-1zM8 8.5h8V16l-8-1z" /></svg>
      </TaskIcon>
      <TaskIcon name="搜索"><Search size={18} strokeWidth={1.5} className="-scale-x-100" /></TaskIcon>
      <TaskIcon name="Cortana"><span className="h-[15px] w-[15px] rounded-full border-2 border-white" /></TaskIcon>
      <TaskIcon name="任务视图">
        <Ico><path d="M1 0v3h9V0M1 5h9v6H1zM1 16v-3h9v3M13.5 0v3M13.5 7v9M12 5h3" stroke="#fff" /></Ico>
      </TaskIcon>
      <TaskIcon name="浏览器">
        <svg width="22" height="22" viewBox="0 0 22 22" fill="#fff" stroke="#20353f">
          <circle cx="8" cy="6" r="5.5" />
          <circle cx="16" cy="8" r="5.5" />
          <circle cx="14" cy="16" r="5.5" />
          <circle cx="6" cy="14" r="5.5" />
          <path d="M11 11Q9 5 15 4M11 11q6-2 7 4M11 11q2 6-4 7M11 11Q5 13 4 7" fill="none" strokeWidth="1.5" />
        </svg>
      </TaskIcon>
      <div className="ml-1 flex h-[34px]">
        <label className="flex w-[164px] items-center bg-[#ececec] pl-1">
          <svg width="20" height="20" viewBox="0 0 20 20" fill="none">
            <path d="M3 11h13q0-6-6-6.5Q4 5 3.5 11 4 17 10 17q4 0 6-3" stroke="#3b9bea" strokeWidth="3" />
            <path d="M1 17Q4 6 18 1" stroke="#63b8f4" strokeWidth="1.5" />
          </svg>
          <span className="mx-[3px] rotate-180"><Caret small /></span>
          <input aria-label="搜索内容" defaultValue="maya基础教程" className="ml-1 min-w-0 flex-1 text-xs text-black" />
        </label>
        <button className="w-14 bg-[#2088ff] text-xs">搜索一下</button>
      </div>
      <div className="ml-[5px] flex gap-px">
        <TaskIcon name="360浏览器">
          <svg width="22" height="22" viewBox="0 0 22 22" fill="none"><circle cx="11" cy="11" r="10" fill="#fff" /><circle cx="11" cy="11" r="9" fill="#5ec42c" /><path d="M6 11h10q0-5-5-5t-5 5q1 5 5 5 3 0 4.5-2" stroke="#fff" strokeWidth="2.5" /><path d="M2 19Q8 5 20 1" stroke="#3ba81a" strokeWidth="1.5" /></svg>
        </TaskIcon>
        <TaskIcon name="Edge" running>
          <svg width="22" height="22" viewBox="0 0 22 22"><path d="M1 10Q3 1 12 1q8 1 9 9v3H8q1 5 7 5 3 0 5-1v3q-3 2-7 2-9-1-9-9 0-4 4-6-3 0-7 3zM8 9h7q0-3-3.5-3T8 9z" fill="#0f7fdc" /></svg>
        </TaskIcon>
        <TaskIcon name="WPS" running>
          <svg width="21" height="21" viewBox="0 0 21 21" fill="none"><rect width="21" height="21" rx="2" fill="#2f7df0" /><path d="M3 7h4l2.5 7 3-7M6 7h6.5l2 7L18 7h-5" stroke="#fff" strokeWidth="1.7" /></svg>
        </TaskIcon>
        <TaskIcon name="记事本" running>
          <svg width="22" height="22" viewBox="0 0 22 22"><path d="M18 2l4 17-6 1z" fill="#dfe6e8" /><path d="M7 2h12l-4 18-14-3z" fill="#5fb4c4" /><path d="M8 3h10l-2 8-11-1z" fill="#a8dce6" /></svg>
        </TaskIcon>
        <TaskIcon name="AutoCAD" active running>
          <svg width="24" height="24" viewBox="0 0 24 24"><path d="M0 0h24v24H0z" fill="#f8e9e4" /><path d="M10 3h4l6 17h-4l-2-5H9l-2 5H3z" fill="#c01820" /><path d="M12 7l2 6h-4z" fill="#f8e9e4" /></svg>
        </TaskIcon>
        <TaskIcon name="图片" running>
          <svg width="24" height="24" viewBox="0 0 24 24"><circle cx="12" cy="12" r="12" fill="#6f7362" /><path d="M4 9q-2-5 2-4l5 1 6-3q2 4-1 7 2 4-1 7-2 4-7 4-6-1-6-6z" fill="#e6b5a8" /><ellipse cx="14" cy="12" rx="3" ry="2.5" fill="#f6d3c8" /><circle cx="13" cy="12" r=".7" fill="#733" /><circle cx="15" cy="12" r=".7" fill="#733" /><circle cx="10" cy="9" r=".8" fill="#322" /><circle cx="16" cy="8" r=".8" fill="#322" /></svg>
        </TaskIcon>
      </div>
      <div className="ml-auto flex items-center text-xs">
        <Ico s={12} vb="0 0 12 12"><path d="M1 9l5-5 5 5" stroke="#fff" strokeWidth="1.3" /></Ico>
        <span className="ml-[10px]"><Ico s={17}><path d="M4 2h11v9H4zM1 1h4v4H1zM9.5 11v3M6 14.5h7M3 5v9h2" stroke="#fff" /></Ico></span>
        <span className="ml-[7px]"><Ico s={17}><path d="M1 6h2l3-3v10L3 10H1z" stroke="#fff" /><circle cx="12" cy="11" r="4" fill="#d8262c" stroke="none" /><path d="M10.5 9.5l3 3M13.5 9.5l-3 3" stroke="#fff" /></Ico></span>
        <span className="ml-2 text-sm">英</span>
        <span className="ml-[13px] flex h-4 w-4 items-center justify-center rounded bg-[#2a86ff] text-[13px] font-bold leading-4">Q</span>
        <time className="ml-[30px] w-[72px] text-center leading-[17px]">
          16:44 周五
          <br />
          2020/11/13
        </time>
        <button aria-label="通知" className="relative ml-[32px] mr-[20px]">
          <svg width="17" height="18" viewBox="0 0 18 18"><path d="M1 1h15v12H8l-3 4v-4H1z" fill="#fff" /><path d="M4 4h9M4 7h9M4 10h6" stroke="#1c2844" /></svg>
          <span className="absolute -right-2 top-2 flex h-4 w-4 items-center justify-center rounded-full border border-[#999] bg-[#333] text-[11px]">1</span>
        </button>
        <span className="mr-1 h-10 w-px bg-[#66708a]" />
      </div>
    </footer>
  );
}

export default function App() {
  return (
    <div className="relative flex h-screen flex-col overflow-hidden bg-[#cbcbcb] font-['Noto_Sans','Noto_Sans_CJK_SC',sans-serif]">
      <div className="mx-[3px] mt-[2px] flex min-h-0 flex-1 flex-col bg-[#f5f5f5]">
        <TitleBar />
        <Ribbon />
        <div className="h-1" />
        <DrawingArea />
        <CommandLine />
        <StatusBar />
        <div className="h-1 shrink-0" />
      </div>
      <Taskbar />

      <LayerPalette />

      <div className="pointer-events-none absolute left-[15px] top-[55px] h-[369px] w-[669px] border-[3px] border-[#ff3a3a]" />
      <div className="pointer-events-none absolute left-[23px] top-[942px] h-[66px] w-[120px] border-[3px] border-[#ff3a3a]" />
      <svg width="140" height="420" viewBox="80 460 140 420" className="pointer-events-none absolute left-[80px] top-[460px]">
        <path d="M210 466l4 22-5-1L84 873l-2-1L200 483l-5-2z" fill="#ff3a3a" />
      </svg>

      <div className="absolute right-[2px] top-[689px] h-[57px] w-[8px] overflow-hidden rounded-full bg-[#666] pt-8">
        <svg width="8" height="24" viewBox="0 0 8 24"><path d="M4 0v24" stroke="#4dcc6a" strokeWidth="6" strokeDasharray="1 1" /></svg>
      </div>

      <svg width="52" height="52" viewBox="0 0 52 52" className="absolute bottom-[70px] right-[448px]">
        <circle cx="26" cy="26" r="24" fill="#eceef1" stroke="#2b8cf0" strokeWidth="2" />
        <path d="M8 34q-1-24 18-25 19 1 18 25z" fill="#c5ccd6" />
        <path d="M6 33q20 8 40 0l-1 8H7z" fill="#a4aeba" />
        <path d="M14 40h7v9l-7-3z" fill="#a4aeba" />
        <path d="M22 41h20q-6 9-20 8z" fill="#fff" />
        <ellipse cx="22" cy="22" rx="3.5" ry="5" fill="#fff" />
        <ellipse cx="31" cy="22" rx="3.5" ry="5" fill="#fff" />
        <circle cx="23" cy="22" r="1.5" fill="#667" />
        <path d="M29 22h4" stroke="#667" strokeWidth="1.5" />
        <ellipse cx="26" cy="30" rx="11" ry="2.5" fill="#fff" />
      </svg>

      <div className="pointer-events-none absolute bottom-[17px] right-[5px] text-[37px] font-black leading-[42px] text-[#858585]">最需教育</div>
    </div>
  );
}
